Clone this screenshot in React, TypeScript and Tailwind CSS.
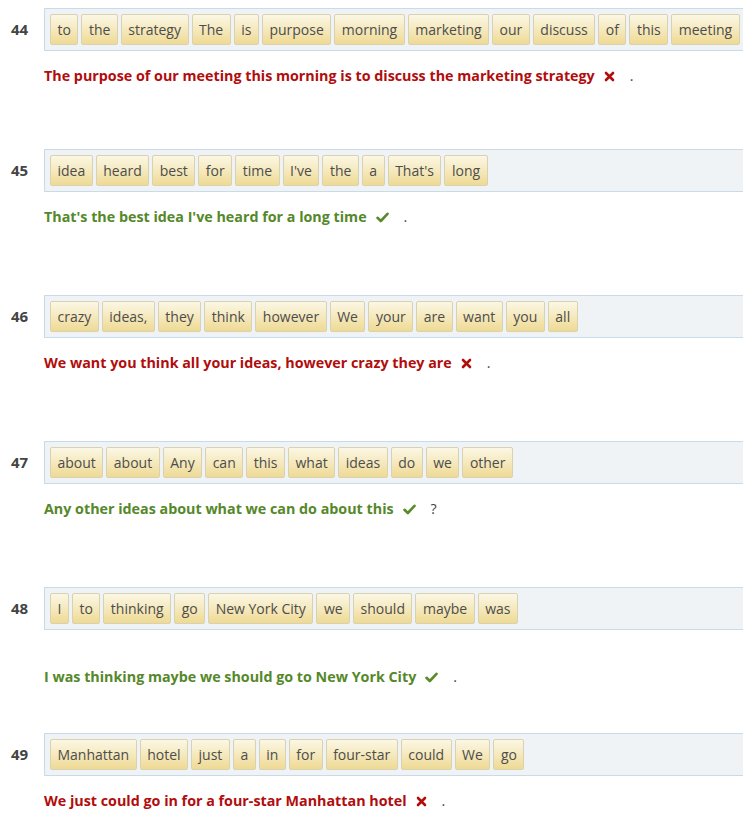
import React from "react";

type Item = {
  n: number;
  words: string[];
  sentence: string;
  ok: boolean;
  punct: string;
  extra?: boolean;
};

const items: Item[] = [
  {
    n: 44,
    words: ["to", "the", "strategy", "The", "is", "purpose", "morning", "marketing", "our", "discuss", "of", "this", "meeting"],
    sentence: "The purpose of our meeting this morning is to discuss the marketing strategy",
    ok: false,
    punct: ".",
  },
  {
    n: 45,
    words: ["idea", "heard", "best", "for", "time", "I've", "the", "a", "That's", "long"],
    sentence: "That's the best idea I've heard for a long time",
    ok: true,
    punct: ".",
  },
  {
    n: 46,
    words: ["crazy", "ideas,", "they", "think", "however", "We", "your", "are", "want", "you", "all"],
    sentence: "We want you think all your ideas, however crazy they are",
    ok: false,
    punct: ".",
  },
  {
    n: 47,
    words: ["about", "about", "Any", "can", "this", "what", "ideas", "do", "we", "other"],
    sentence: "Any other ideas about what we can do about this",
    ok: true,
    punct: "?",
  },
  {
    n: 48,
    words: ["I", "to", "thinking", "go", "New York City", "we", "should", "maybe", "was"],
    sentence: "I was thinking maybe we should go to New York City",
    ok: true,
    punct: ".",
    extra: true,
  },
  {
    n: 49,
    words: ["Manhattan", "hotel", "just", "a", "in", "for", "four-star", "could", "We", "go"],
    sentence: "We just could go in for a four-star Manhattan hotel",
    ok: false,
    punct: ".",
  },
];

function Check() {
  return (
    <svg width="13" height="11" viewBox="0 0 13 11" className="inline-block">
      <path d="M1.5 5.8 L4.8 9 L11.5 1.8" fill="none" stroke="#5a8a2a" strokeWidth="2.6" strokeLinecap="round" strokeLinejoin="round" />
    </svg>
  );
}

function Cross() {
  return (
    <svg width="11" height="11" viewBox="0 0 11 11" className="inline-block">
      <path d="M2 2 L9 9 M9 2 L2 9" fill="none" stroke="#b10d0d" strokeWidth="2.6" strokeLinecap="round" />
    </svg>
  );
}

function Row({ item, idx }: { item: Item; idx: number }) {
  const top = idx === 0 ? "" : idx === 1 ? "mt-[63px]" : idx === 5 ? "mt-[46px]" : "mt-[68px]";
  return (
    <div className={top}>
      <div className="flex">
        <div className="w-[44px] shrink-0 pl-[11px] pt-[11px] text-[15px] font-bold text-[#444] leading-[20px]">
          {item.n}
        </div>
        <div className="w-[760px] shrink-0 border border-[#c9dbe8] bg-[#eff3f6] px-[5px] py-[5px] flex gap-[3px]">
          {item.words.map((w, i) => (
            <div
              key={i}
              className="h-[31px] px-[6.5px] border border-[#d9d2b2] rounded-[2px] bg-gradient-to-b from-[#fbf7e4] to-[#efda94] text-[14px] text-[#4d4d4d] leading-[29px] whitespace-nowrap"
            >
              {w}
            </div>
          ))}
        </div>
      </div>
      <div className={`${item.extra ? "mt-[37px]" : "mt-[15px]"} pl-[44px] flex items-center h-[20px] text-[14.3px] font-bold leading-[20px]`}>
        <span className={item.ok ? "text-[#55882a]" : "text-[#b10d0d]"}>{item.sentence}</span>
        <span className="ml-[9px] flex items-center">{item.ok ? <Check /> : <Cross />}</span>
        <span className="ml-[15px] font-normal text-[#444]">{item.punct}</span>
      </div>
    </div>
  );
}

export default function App() {
  return (
    <div
      className="w-[743px] h-[825px] overflow-hidden bg-white pt-[8px]"
      style={{ fontFamily: '"Open Sans", "Noto Sans", sans-serif' }}
    >
      {items.map((it, i) => (
        <Row key={it.n} item={it} idx={i} />
      ))}
    </div>
  );
}
